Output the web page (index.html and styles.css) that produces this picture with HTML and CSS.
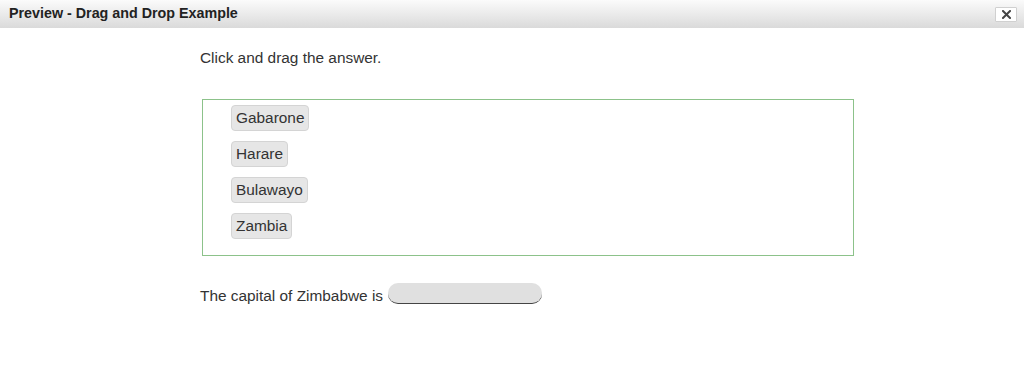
FILE: index.html
```html
<!DOCTYPE html>
<html>
<head>
<meta charset="utf-8">
<title>Preview - Drag and Drop Example</title>
<link rel="stylesheet" href="styles.css">
</head>
<body>
<div class="titlebar">
  <span class="title">Preview - Drag and Drop Example</span>
  <button class="close" aria-label="Close"><svg width="9" height="9" viewBox="0 0 9 9"><path d="M1 1 L8 8 M8 1 L1 8" stroke="#444" stroke-width="2" stroke-linecap="square"/></svg></button>
</div>
<main class="content">
  <p class="instruction">Click and drag the answer.</p>
  <div class="answers">
    <div class="item">Gabarone</div>
    <div class="item">Harare</div>
    <div class="item">Bulawayo</div>
    <div class="item">Zambia</div>
  </div>
  <p class="question">The capital of Zimbabwe is <span class="drop"></span></p>
</main>
</body>
</html>
```

FILE: styles.css
```css
html, body {
  margin: 0;
  padding: 0;
  background: #fff;
  font-family: "Liberation Sans", Arial, sans-serif;
  color: #333;
}
.titlebar {
  height: 28px;
  background: linear-gradient(#fbfbfb, #dadada);
  display: flex;
  align-items: center;
  justify-content: space-between;
  padding: 0 7px 0 9px;
}
.title {
  font-size: 14.3px;
  font-weight: bold;
  color: #222;
  margin-top: -2px;
}
.close {
  width: 22px;
  height: 15px;
  padding: 0;
  border: 1px solid #d0d0d0;
  background: #fff;
  display: flex;
  align-items: center;
  justify-content: center;
  border-radius: 1px;
}
.content {
  width: 656px;
  padding-left: 200px;
}
.instruction {
  margin: 21px 0 0;
  font-size: 15.4px;
  line-height: 18px;
}
.answers {
  margin: 32px 2px 0;
  border: 1px solid #8cc28a;
  padding: 5px 28px;
  display: flex;
  flex-direction: column;
  align-items: flex-start;
  gap: 10px;
  height: 145px;
}
.item {
  background: #e6e6e6;
  border: 1px solid #d4d4d4;
  border-radius: 4px;
  padding: 0 4px;
  height: 24px;
  line-height: 24px;
  font-size: 15.4px;
  color: #333;
}
.question {
  margin: 27px 0 0;
  font-size: 15.4px;
  line-height: 24px;
}
.drop {
  display: inline-block;
  width: 154px;
  height: 21px;
  background: #e0e0e0;
  border-radius: 10px;
  border-bottom: 1px solid #444;
  vertical-align: -3px;
  box-sizing: border-box;
  margin-left: 1px;
}
```
